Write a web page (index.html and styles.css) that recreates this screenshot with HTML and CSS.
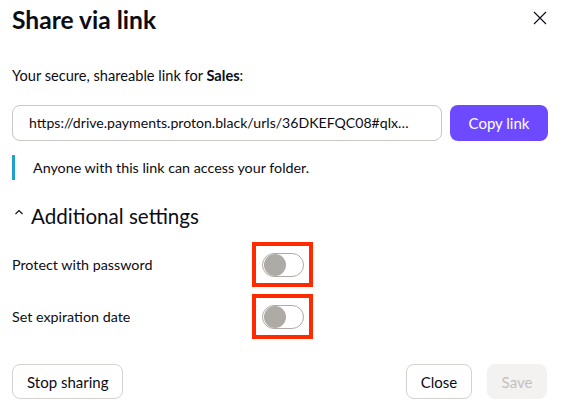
FILE: index.html
```html
<!DOCTYPE html>
<html>
<head>
<meta charset="utf-8">
<link rel="stylesheet" href="styles.css">
</head>
<body>
<div class="modal">
  <header class="modal-header">
    <h1 class="title">Share via link</h1>
    <button class="close-x" aria-label="Close">
      <svg width="14" height="14" viewBox="0 0 14 14"><path d="M1 1 L13 13 M13 1 L1 13" stroke="#0c0c14" stroke-width="1.1" fill="none"/></svg>
    </button>
  </header>
  <p class="intro">Your secure, shareable link for <strong>Sales</strong>:</p>
  <div class="link-row">
    <div class="link-input">https://drive.payments.proton.black/urls/36DKEFQC08#qlx…</div>
    <button class="btn-primary">Copy link</button>
  </div>
  <div class="notice">Anyone with this link can access your folder.</div>
  <div class="section-title">
    <svg class="chev" width="10" height="8" viewBox="0 0 10 8"><path d="M1.5 6 L5 2.5 L8.5 6" stroke="#0c0c14" stroke-width="1.1" fill="none"/></svg>
    <span>Additional settings</span>
  </div>
  <div class="settings">
    <div class="setting-label">Protect with password</div>
    <div class="highlight"><span class="toggle"><span class="knob"></span></span></div>
    <div class="setting-label">Set expiration date</div>
    <div class="highlight"><span class="toggle"><span class="knob"></span></span></div>
  </div>
  <footer class="modal-footer">
    <button class="btn">Stop sharing</button>
    <div class="footer-right">
      <button class="btn btn-close">Close</button>
      <button class="btn btn-disabled">Save</button>
    </div>
  </footer>
</div>
</body>
</html>
```
FILE: styles.css
```css
* { box-sizing: border-box; }
html, body { margin: 0; background: #fff; }
body {
  font-family: Lato, "Noto Sans", sans-serif;
  color: #0c0c14;
  width: 566px;
  height: 413px;
  overflow: hidden;
}
.modal {
  padding: 5px 18px 0 12px;
}
.modal-header {
  display: flex;
  justify-content: space-between;
  align-items: flex-start;
}
.title {
  margin: 0;
  font-size: 24.6px;
  line-height: 30px;
  font-weight: 700;
}
.close-x {
  border: 0;
  background: none;
  padding: 0;
  margin: 6px 1px 0 0;
  width: 14px;
  height: 14px;
  display: flex;
}
.intro {
  margin: 31px 0 0;
  font-size: 14.6px;
  line-height: 20px;
}
.intro strong { font-weight: 700; }
.link-row {
  display: flex;
  gap: 8px;
  margin-top: 19px;
}
.link-input {
  flex: 1;
  height: 36px;
  border: 1px solid #c9c6c3;
  border-radius: 8px;
  padding: 0 14px 0 16px;
  font-size: 14.1px;
  line-height: 34px;
  white-space: nowrap;
  overflow: hidden;
}
.btn-primary {
  width: 98px;
  height: 36px;
  border: 0;
  border-radius: 8px;
  background: #6d4aff;
  color: #fff;
  font-family: inherit;
  font-size: 15px;
}
.notice {
  margin-top: 14px;
  border-left: 3px solid #239ece;
  padding-left: 18px;
  font-size: 14.3px;
  line-height: 25px;
}
.section-title {
  display: flex;
  align-items: center;
  margin-top: 22px;
  font-size: 20.6px;
  line-height: 28px;
}
.chev { margin: 0 7px 0 2px; position: relative; top: -4px; }
.settings {
  display: grid;
  grid-template-columns: 240px auto;
  justify-content: start;
  align-items: center;
  row-gap: 7px;
  margin-top: 12px;
}
.setting-label {
  font-size: 14.3px;
}
.highlight {
  width: 61px;
  height: 45px;
  border: 4px solid #ff2a00;
  padding: 7px 5px 6px 6px;
}
.toggle {
  display: block;
  width: 42px;
  height: 24px;
  border: 1px solid #aeaaa6;
  border-radius: 12px;
  background: #fff;
  position: relative;
}
.knob {
  position: absolute;
  left: 1px;
  top: 0;
  width: 22px;
  height: 22px;
  border-radius: 50%;
  background: #aeaaa6;
}
.modal-footer {
  display: flex;
  justify-content: space-between;
  margin-top: 25px;
  padding-right: 1px;
}
.footer-right { display: flex; gap: 15px; }
.btn {
  height: 35px;
  padding: 0 14px;
  border: 1px solid #d5d2cf;
  border-radius: 8px;
  background: #fff;
  color: #0c0c14;
  font-family: inherit;
  font-size: 15px;
}
.btn-close { width: 66px; padding: 0; }
.btn-disabled {
  width: 60px;
  padding: 0;
  background: #f3f2f0;
  border-color: #f3f2f0;
  color: #c3c0bd;
}
```
